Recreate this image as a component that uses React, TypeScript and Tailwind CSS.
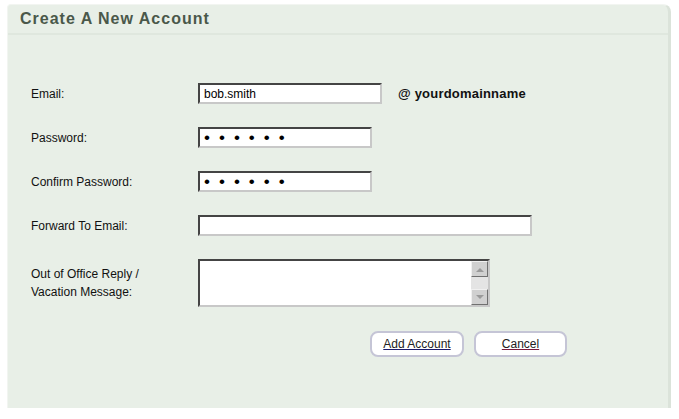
import * as React from "react";

const inputBox =
  "h-[21px] bg-white border-2 border-t-[#444] border-l-[#444] border-b-[#c8c8c8] border-r-[#c8c8c8] px-[4px] text-[12px] text-black outline-none";

function Row({ label, children }: { label: React.ReactNode; children: React.ReactNode }) {
  return (
    <div className="flex items-center">
      <div className="w-[167px] shrink-0 text-[12px] leading-[18px] text-[#111]">{label}</div>
      {children}
    </div>
  );
}

export default function App() {
  return (
    <div className="pl-[7px] pt-[4px] font-['Liberation_Sans',Arial,sans-serif]">
      <div className="w-[664px] h-[404px] bg-[#e8efe7] rounded-tr-[8px] rounded-tl-[4px] border-t border-l border-[#f2f5f1] border-r-[3px] border-r-[#dbe3da] flex flex-col">
        {/* Header */}
        <div className="h-[30px] border-b-2 border-[#dfe7de] flex items-center pl-[12px]">
          <h2 className="text-[16px] font-bold tracking-[1px] text-[#4a584a]">Create A New Account</h2>
        </div>

        <div className="pl-[23px] pt-[48px] flex flex-col gap-[23px]">
          <Row label="Email:">
            <input readOnly defaultValue="bob.smith" className={`${inputBox} w-[184px]`} />
            <span className="ml-[16px] text-[13px] font-bold tracking-[0.2px] text-[#111]">@ yourdomainname</span>
          </Row>
          <Row label="Password:">
            <input
              readOnly
              type="password"
              defaultValue="secret"
              className={`${inputBox} w-[174px] tracking-[9px] text-[17px] leading-none`}
            />
          </Row>
          <Row label="Confirm Password:">
            <input
              readOnly
              type="password"
              defaultValue="secret"
              className={`${inputBox} w-[174px] tracking-[9px] text-[17px] leading-none`}
            />
          </Row>
          <Row label="Forward To Email:">
            <input readOnly className={`${inputBox} w-[334px]`} />
          </Row>
          <Row
            label={
              <>
                Out of Office Reply /
                <br />
                Vacation Message:
              </>
            }
          >
            <div className="w-[292px] h-[48px] bg-white border-2 border-t-[#444] border-l-[#444] border-b-[#c8c8c8] border-r-[#c8c8c8] flex">
              <textarea readOnly className="flex-1 resize-none outline-none text-[12px] p-[2px]" />
              <div className="w-[17px] bg-[#e4e4e4] flex flex-col justify-between">
                <div className="h-[16px] bg-[#d0d0d0] border border-t-[#f0f0f0] border-l-[#f0f0f0] border-b-[#707070] border-r-[#707070] flex items-center justify-center">
                  <svg width="8" height="5" viewBox="0 0 8 5">
                    <path d="M0 5 L4 1 L8 5 Z" fill="#9a9a9a" />
                  </svg>
                </div>
                <div className="h-[16px] bg-[#d0d0d0] border border-t-[#f0f0f0] border-l-[#f0f0f0] border-b-[#707070] border-r-[#707070] flex items-center justify-center">
                  <svg width="8" height="5" viewBox="0 0 8 5">
                    <path d="M0 0 L4 4 L8 0 Z" fill="#9a9a9a" />
                  </svg>
                </div>
              </div>
            </div>
          </Row>
        </div>

        <div className="flex gap-[10px] pl-[362px] pt-[24px]">
          <button className="w-[94px] h-[26px] bg-white border-2 border-[#c5c5d6] rounded-[8px] text-[12px] text-[#222] underline decoration-[#1a1a6a]">
            Add Account
          </button>
          <button className="w-[93px] h-[26px] bg-white border-2 border-[#c5c5d6] rounded-[8px] text-[12px] text-[#222] underline decoration-[#7a1a3a]">
            Cancel
          </button>
        </div>
      </div>
    </div>
  );
}
